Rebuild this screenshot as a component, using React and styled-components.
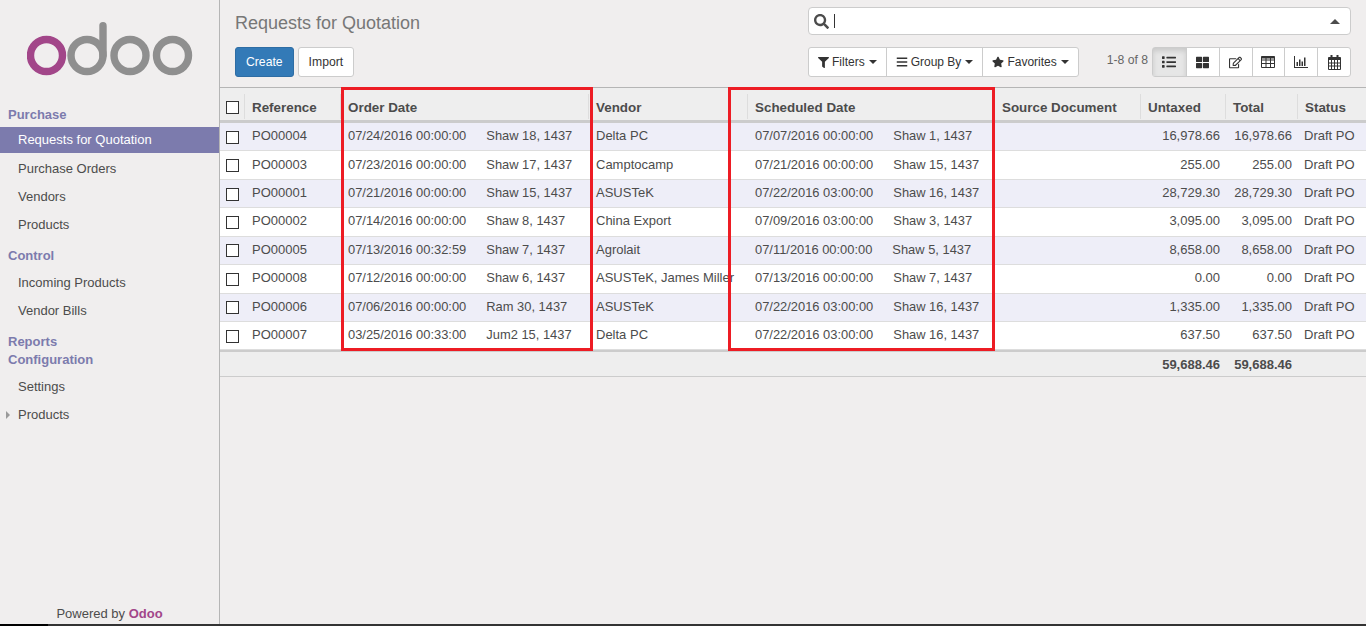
import React from "react"
import styled, { createGlobalStyle } from "styled-components"
import { FaSearch, FaFilter, FaBars, FaStar, FaList, FaThLarge, FaRegEdit } from "react-icons/fa"

const GlobalStyle = createGlobalStyle`
  html, body {
    margin: 0;
    height: 100%;
    overflow: hidden;
    background: #f0eeee;
    font-family: "Liberation Sans", Arial, sans-serif;
    font-size: 13px;
    color: #4c4c4c;
  }
  * { box-sizing: border-box; }
`

const rows = [
  ["PO00004", "07/24/2016 00:00:00", "Shaw 18, 1437", "Delta PC", "07/07/2016 00:00:00", "Shaw 1, 1437", "16,978.66"],
  ["PO00003", "07/23/2016 00:00:00", "Shaw 17, 1437", "Camptocamp", "07/21/2016 00:00:00", "Shaw 15, 1437", "255.00"],
  ["PO00001", "07/21/2016 00:00:00", "Shaw 15, 1437", "ASUSTeK", "07/22/2016 03:00:00", "Shaw 16, 1437", "28,729.30"],
  ["PO00002", "07/14/2016 00:00:00", "Shaw 8, 1437", "China Export", "07/09/2016 03:00:00", "Shaw 3, 1437", "3,095.00"],
  ["PO00005", "07/13/2016 00:32:59", "Shaw 7, 1437", "Agrolait", "07/11/2016 00:00:00", "Shaw 5, 1437", "8,658.00"],
  ["PO00008", "07/12/2016 00:00:00", "Shaw 6, 1437", "ASUSTeK, James Miller", "07/13/2016 00:00:00", "Shaw 7, 1437", "0.00"],
  ["PO00006", "07/06/2016 00:00:00", "Ram 30, 1437", "ASUSTeK", "07/22/2016 03:00:00", "Shaw 16, 1437", "1,335.00"],
  ["PO00007", "03/25/2016 00:33:00", "Jum2 15, 1437", "Delta PC", "07/22/2016 03:00:00", "Shaw 16, 1437", "637.50"],
]

const columns = [
  { width: 25 },
  { width: 96, label: "Reference" },
  { width: 248, label: "Order Date" },
  { width: 159, label: "Vendor" },
  { width: 247, label: "Scheduled Date" },
  { width: 146, label: "Source Document" },
  { width: 85, label: "Untaxed" },
  { width: 72, label: "Total" },
  { width: 68, label: "Status" },
]

const Logo = () => (
  <svg width="170" height="60" viewBox="0 0 170 60" aria-hidden="true">
    <g fill="none" strokeWidth="7.4">
      <circle cx="19.5" cy="36.5" r="16" stroke="#a24689" />
      <g stroke="#8f8f8f">
        <circle cx="60" cy="36.5" r="16" />
        <path d="M76 36.5V6.7" strokeLinecap="round" />
        <circle cx="103" cy="36.5" r="16" />
        <circle cx="145.5" cy="36.5" r="16" />
      </g>
    </g>
  </svg>
)

const TableIcon = () => (
  <svg width="14" height="12" viewBox="0 0 14 12" fill="none" stroke="#333" aria-hidden="true">
    <path d="M.5.5h13v11H.5zM.5 4h13M.5 7.5h13M5 .5v11M9.500 .5v11" />
    <path d="M.5 1.500h13" strokeWidth="2" />
  </svg>
)

const ChartIcon = () => (
  <svg width="14" height="12" viewBox="0 0 14 12" fill="#333" aria-hidden="true">
    <path d="M0 0h1v11h13v1H0z" />
    <path d="M2.500 6h1.500v4H2.500zM5 3.500h1.500V10H5zM7.500 5.500H9V10H7.500zM10 1.500h1.500V10H10z" />
  </svg>
)

const CalendarIcon = () => (
  <svg width="13" height="15" viewBox="0 0 13 15" fill="none" stroke="#333" aria-hidden="true">
    <path d="M.5 2.500h12v12H.5zM.5 8h12M.5 11h12M3.500 5v9.500M6.500 5v9.500M9.500 5v9.500" />
    <path d="M.5 3.800h12" strokeWidth="2.400" />
    <path d="M3.500 0v3M9.500 0v3" strokeWidth="2" />
  </svg>
)

const App = () => (
  <Page>
    <GlobalStyle />
    <Workspace>
      <Sidebar>
        <LogoBox>
          <Logo />
        </LogoBox>
        <Nav>
          <NavHeading>Purchase</NavHeading>
          <NavItem $active>Requests for Quotation</NavItem>
          <NavItem>Purchase Orders</NavItem>
          <NavItem>Vendors</NavItem>
          <NavItem>Products</NavItem>
          <NavHeading $gap $after={1}>Control</NavHeading>
          <NavItem>Incoming Products</NavItem>
          <NavItem>Vendor Bills</NavItem>
          <NavHeading $gap $after={-4}>Reports</NavHeading>
          <NavHeading $tight $after={5}>Configuration</NavHeading>
          <NavItem>Settings</NavItem>
          <NavItem $expandable>Products</NavItem>
        </Nav>
        <PoweredBy>
          Powered by <b>Odoo</b>
        </PoweredBy>
      </Sidebar>

      <Main>
        <ControlPanel>
          <PanelLeft>
            <Title>Requests for Quotation</Title>
            <ButtonRow>
              <PrimaryButton>Create</PrimaryButton>
              <DefaultButton>Import</DefaultButton>
            </ButtonRow>
          </PanelLeft>
          <PanelRight>
            <SearchBox>
              <FaSearch size={15} color="#4c4c4c" />
              <Caret />
              <SearchToggle />
            </SearchBox>
            <ToolRow>
              <ButtonGroup>
                <FilterButton>
                  <FaFilter size={11} /> Filters <DropCaret />
                </FilterButton>
                <FilterButton>
                  <FaBars size={12} /> Group By <DropCaret />
                </FilterButton>
                <FilterButton>
                  <FaStar size={12} /> Favorites <DropCaret />
                </FilterButton>
              </ButtonGroup>
              <Pager>1-8 of 8</Pager>
              <ButtonGroup>
                <ViewButton $active><FaList size={14} /></ViewButton>
                <ViewButton><FaThLarge size={13} /></ViewButton>
                <ViewButton><FaRegEdit size={13} /></ViewButton>
                <ViewButton><TableIcon /></ViewButton>
                <ViewButton><ChartIcon /></ViewButton>
                <ViewButton><CalendarIcon /></ViewButton>
              </ButtonGroup>
            </ToolRow>
          </PanelRight>
        </ControlPanel>

        <TableWrap>
          <ListTable>
            <colgroup>
              {columns.map((col, i) => (
                <col key={i} style={{ width: col.width }} />
              ))}
            </colgroup>
            <thead>
              <tr>
                <HeadCell><CheckBox /></HeadCell>
                {columns.slice(1).map(col => (
                  <HeadCell key={col.label}>{col.label}</HeadCell>
                ))}
              </tr>
            </thead>
            <tbody>
              {rows.map(row => (
                <Row key={row[0]}>
                  <Cell $box><RowCheck /></Cell>
                  <Cell>{row[0]}</Cell>
                  <Cell>
                    <DatePair>
                      <span>{row[1]}</span>
                      <span>{row[2]}</span>
                    </DatePair>
                  </Cell>
                  <Cell>{row[3]}</Cell>
                  <Cell>
                    <DatePair>
                      <span>{row[4]}</span>
                      <span>{row[5]}</span>
                    </DatePair>
                  </Cell>
                  <Cell />
                  <Cell $right>{row[6]}</Cell>
                  <Cell $right>{row[6]}</Cell>
                  <StatusCell>Draft PO</StatusCell>
                </Row>
              ))}
            </tbody>
            <tfoot>
              <tr>
                <FootCell colSpan={6} />
                <FootCell>59,688.46</FootCell>
                <FootCell>59,688.46</FootCell>
                <FootCell />
              </tr>
            </tfoot>
          </ListTable>
          <Highlight $left={121} $width={252} />
          <Highlight $left={508} $width={267} />
        </TableWrap>
      </Main>
    </Workspace>
    <BottomStrip />
  </Page>
)

const Page = styled.div`
  height: 626px;
  display: flex;
  flex-direction: column;
`

const Workspace = styled.div`
  flex: 1;
  min-height: 0;
  display: flex;
`

const Sidebar = styled.aside`
  width: 220px;
  flex: none;
  display: flex;
  flex-direction: column;
  border-right: 1px solid #b5b5b5;
`

const LogoBox = styled.div`
  height: 101px;
  padding: 19px 0 0 27px;
`

const Nav = styled.nav`
  flex: 1;
  display: flex;
  flex-direction: column;
`

const NavHeading = styled.div`
  height: ${({ $tight }) => ($tight ? "18px" : "26px")};
  margin-top: ${({ $gap }) => ($gap ? "3px" : "0")};
  margin-bottom: ${({ $after }) => $after || 0}px;
  padding-left: 8px;
  line-height: ${({ $tight }) => ($tight ? "20px" : "28px")};
  font-size: 13px;
  font-weight: 700;
  color: #7c7bad;
`

const NavItem = styled.div`
  position: relative;
  height: ${({ $active }) => ($active ? "26px" : "28px")};
  margin-bottom: ${({ $active }) => ($active ? "2px" : "0")};
  padding-left: 18px;
  line-height: ${({ $active }) => ($active ? "26px" : "28px")};
  background: ${({ $active }) => ($active ? "#7c7bad" : "transparent")};
  color: ${({ $active }) => ($active ? "#ffffff" : "#4c4c4c")};

  ${({ $expandable }) =>
    $expandable &&
    `&::before {
      content: "";
      position: absolute;
      left: 6px;
      top: 10px;
      border-left: 4px solid #9a9a9a;
      border-top: 4px solid transparent;
      border-bottom: 4px solid transparent;
    }`}
`

const PoweredBy = styled.div`
  height: 21px;
  text-align: center;
  line-height: 22px;
  font-size: 13px;
  color: #4c4c4c;

  b {
    color: #a24689;
  }
`

const Main = styled.main`
  flex: 1;
  min-width: 0;
  display: flex;
  flex-direction: column;
`

const ControlPanel = styled.div`
  height: 88px;
  flex: none;
  display: flex;
  justify-content: space-between;
  padding: 7px 15px 0 15px;
  border-bottom: 1px solid #b5b5b5;
`

const PanelLeft = styled.div`
  display: flex;
  flex-direction: column;
`

const Title = styled.div`
  height: 32px;
  margin-bottom: 8px;
  padding-top: 1px;
  font-size: 18px;
  line-height: 30px;
  color: #777777;
`

const ButtonRow = styled.div`
  display: flex;
  gap: 4px;
`

const PrimaryButton = styled.button`
  height: 30px;
  padding: 0 10px;
  font: inherit;
  font-size: 12.200px;
  color: #ffffff;
  background: #337ab7;
  border: 1px solid #2e6da4;
  border-radius: 3px;
`

const DefaultButton = styled(PrimaryButton)`
  color: #333333;
  background: #ffffff;
  border-color: #cccccc;
`

const PanelRight = styled.div`
  width: 543px;
  display: flex;
  flex-direction: column;
`

const SearchBox = styled.div`
  position: relative;
  height: 28px;
  margin-bottom: 12px;
  display: flex;
  align-items: center;
  gap: 5px;
  padding: 0 5px;
  background: #ffffff;
  border: 1px solid #cccccc;
  border-radius: 4px;
`

const Caret = styled.span`
  width: 1px;
  height: 14px;
  background: #333333;
`

const SearchToggle = styled.span`
  position: absolute;
  right: 10px;
  top: 11px;
  border-left: 5px solid transparent;
  border-right: 5px solid transparent;
  border-bottom: 5px solid #4c4c4c;
`

const ToolRow = styled.div`
  display: flex;
  align-items: flex-start;
`

const ButtonGroup = styled.div`
  display: flex;
  height: 30px;
  background: #ffffff;
  border: 1px solid #cccccc;
  border-radius: 3px;
`

const FilterButton = styled.div`
  display: flex;
  align-items: center;
  gap: 3px;
  padding: 0 9px;
  font-size: 12px;
  color: #333333;

  & + & {
    border-left: 1px solid #cccccc;
  }
`

const DropCaret = styled.span`
  margin-left: 1px;
  border-left: 4px solid transparent;
  border-right: 4px solid transparent;
  border-top: 4px solid #333333;
`

const Pager = styled.div`
  margin-left: auto;
  margin-right: 4px;
  line-height: 26px;
  font-size: 12.200px;
  color: #666666;
`

const ViewButton = styled.div`
  width: 32.830px;
  display: flex;
  align-items: center;
  justify-content: center;
  color: #333333;
  background: ${({ $active }) => ($active ? "#e6e6e6" : "transparent")};
  box-shadow: ${({ $active }) => ($active ? "inset 0 3px 5px rgba(0,0,0,.125)" : "none")};

  & + & {
    border-left: 1px solid #cccccc;
  }
`

const TableWrap = styled.div`
  position: relative;
`

const ListTable = styled.table`
  width: 1146px;
  table-layout: fixed;
  border-collapse: separate;
  border-spacing: 0;
`

const HeadCell = styled.th`
  position: relative;
  height: 35px;
  padding: 6px 6px 0 7px;
  text-align: left;
  font-size: 13.400px;
  font-weight: 700;
  white-space: nowrap;
  color: #4c4c4c;
  background: #eeeeee;
  border-bottom: 3px solid #cccccc;

  &:first-child {
    padding-left: 6px;
  }

  &:not(:last-child)::after {
    content: "";
    position: absolute;
    right: 0;
    top: 6px;
    bottom: 1px;
    width: 1px;
    background: #dddddd;
  }
`

const Row = styled.tr`
  background: #ffffff;

  &:nth-child(odd) {
    background: #eeeef8;
  }
`

const Cell = styled.td`
  height: 28.430px;
  padding: 0 6px ${({ $box }) => ($box ? "0" : "2px")} ${({ $box }) => ($box ? "6px" : "7px")};
  white-space: nowrap;
  text-align: ${({ $right }) => ($right ? "right" : "left")};
  font-size: 13px;
  color: #4c4c4c;
  border-bottom: 1px solid #dddddd;
`

const StatusCell = styled(Cell)`
  padding-left: 6px;
`

const FootCell = styled.td`
  height: 27px;
  padding: 0 6px;
  text-align: right;
  font-size: 13px;
  font-weight: 700;
  color: #4c4c4c;
  background: #eeeeee;
  border-top: 2px solid #cccccc;
  border-bottom: 1px solid #cccccc;
`

const DatePair = styled.div`
  display: flex;
  gap: 20px;
  font-size: 12.900px;
`

const CheckBox = styled.span`
  display: block;
  width: 13px;
  height: 13px;
  background: #ffffff;
  border: 1px solid #333333;
`

const RowCheck = styled(CheckBox)`
  margin-top: 1px;
`

const Highlight = styled.div`
  position: absolute;
  top: -1px;
  left: ${({ $left }) => $left}px;
  width: ${({ $width }) => $width}px;
  height: 264px;
  border: 3px solid #ed1c24;
  pointer-events: none;
`

const BottomStrip = styled.div`
  height: 2px;
  flex: none;
  background: linear-gradient(to right, #000000 48px, #333333 48px);
`

export default App
